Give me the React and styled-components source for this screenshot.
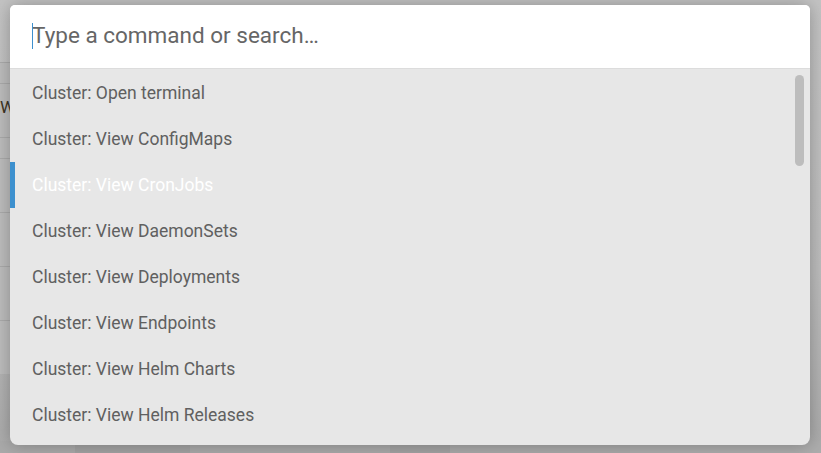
import React from 'react';
import styled, { createGlobalStyle } from 'styled-components';

const GlobalStyle = createGlobalStyle`
  html, body {
    margin: 0;
    padding: 0;
    width: 821px;
    height: 453px;
    overflow: hidden;
  }
  body {
    font-family: Roboto, "Liberation Sans", sans-serif;
  }
`;

const commands = [
  'Cluster: Open terminal',
  'Cluster: View ConfigMaps',
  'Cluster: View CronJobs',
  'Cluster: View DaemonSets',
  'Cluster: View Deployments',
  'Cluster: View Endpoints',
  'Cluster: View Helm Charts',
  'Cluster: View Helm Releases',
];

const App = () => {
  return (
    <>
      <GlobalStyle />
      <Page>
        <Backdrop>
          <SideRows>
            <SideRow />
            <SideRow $tall>W</SideRow>
            <SideRow />
            <SideRow $tall />
            <SideRow $tall />
            <SideRow $tall />
            <SideRow $tall />
          </SideRows>
          <BottomStrip>
            <Block $w={75} />
            <Block $w={115} $dark />
            <Block $w={200} />
            <Block $w={60} $dark />
            <Block $w={180} />
          </BottomStrip>
        </Backdrop>
        <Dialog>
          <SearchBox>
            <Caret />
            <SearchInput placeholder="Type a command or search…" />
          </SearchBox>
          <List>
            {commands.map((c, i) => (
              <Item key={c} $selected={i === 2}>{c}</Item>
            ))}
            <ScrollThumb />
          </List>
        </Dialog>
      </Page>
    </>
  );
};

const Page = styled.div`
  position: relative;
  width: 821px;
  height: 453px;
  background: linear-gradient(#c4c4c4, #bdbdbd 60%, #ababab);
  overflow: hidden;
`;

const Backdrop = styled.div`
  position: absolute;
  inset: 0;
  display: flex;
  flex-direction: column;
  justify-content: space-between;
`;

const SideRows = styled.div`
  display: flex;
  flex-direction: column;
  width: 14px;
  margin-top: 62px;
`;

const SideRow = styled.div`
  height: ${p => (p.$tall ? '53px' : '20px')};
  border-top: 1px solid #ababab;
  font-size: 17px;
  line-height: 46px;
  color: #3d3424;
  background: #bdbdbd;
  overflow: hidden;
`;

const BottomStrip = styled.div`
  display: flex;
  height: 12px;
  background: #adadad;
`;

const Block = styled.div`
  width: ${p => p.$w}px;
  background: ${p => (p.$dark ? '#a3a3a3' : '#aaaaaa')};
`;

const Dialog = styled.div`
  position: absolute;
  top: 5px;
  left: 10px;
  width: 800px;
  height: 440px;
  display: flex;
  flex-direction: column;
  border-radius: 5px 5px 8px 8px;
  overflow: hidden;
  background: #e7e7e7;
  box-shadow: 0 0 18px rgba(0, 0, 0, 0.28);
`;

const SearchBox = styled.div`
  position: relative;
  height: 64px;
  flex-shrink: 0;
  display: flex;
  align-items: center;
  padding-bottom: 3px;
  background: #fff;
  border-bottom: 1px solid #dcdcdc;
  box-sizing: border-box;
`;

const Caret = styled.span`
  position: absolute;
  left: 22px;
  top: 18px;
  width: 1px;
  height: 26px;
  background: #3d90ce;
`;

const SearchInput = styled.input`
  border: none;
  outline: none;
  background: transparent;
  width: 100%;
  padding: 0 22px;
  font-family: Roboto, "Liberation Sans", sans-serif;
  font-size: 22.5px;
  color: #555;

  &::placeholder {
    color: #666;
  }
`;

const List = styled.div`
  position: relative;
  flex: 1;
  padding-top: 1px;
  overflow: hidden;
`;

const Item = styled.div`
  height: 46px;
  display: flex;
  align-items: center;
  padding-left: 22px;
  font-size: 17.5px;
  color: ${p => (p.$selected ? '#fff' : '#606060')};
  box-shadow: ${p => (p.$selected ? 'inset 5px 0 0 #3d90ce' : 'none')};
`;

const ScrollThumb = styled.div`
  position: absolute;
  top: 6px;
  right: 6px;
  width: 9px;
  height: 91px;
  border-radius: 5px;
  background: #bdbdbd;
`;

export default App;
